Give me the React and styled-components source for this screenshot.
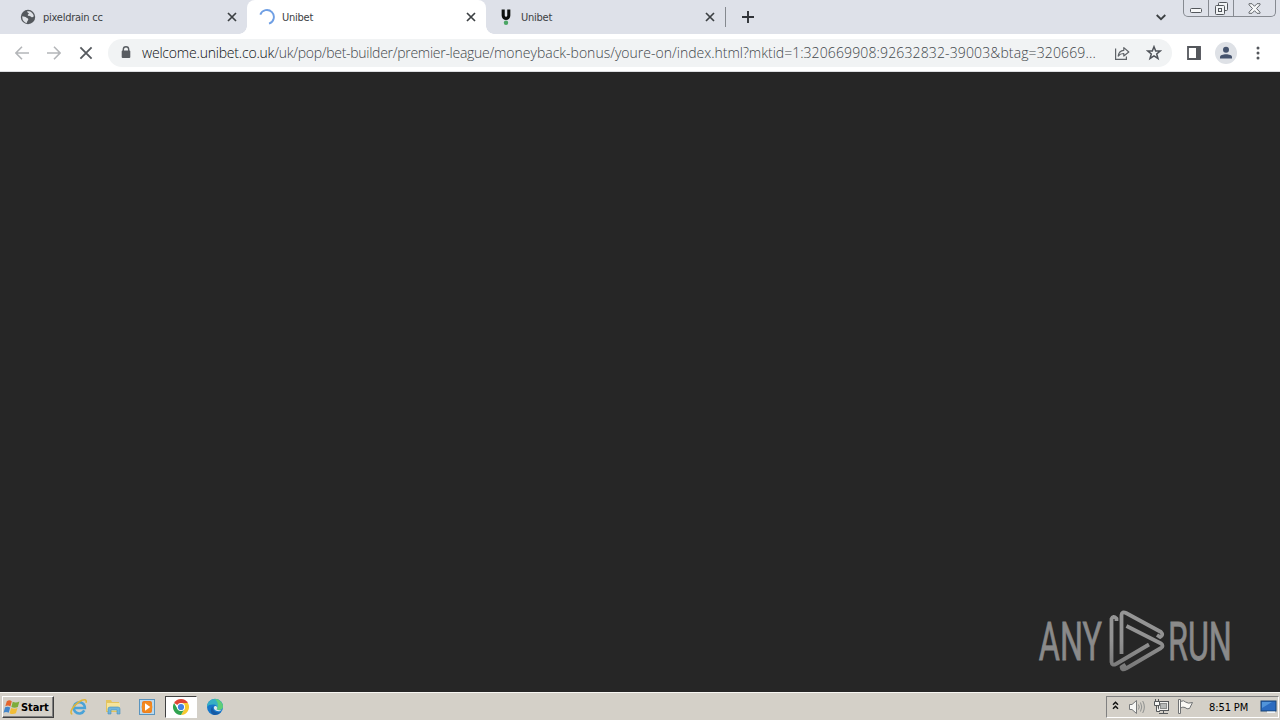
import React from 'react'
import styled, { createGlobalStyle } from 'styled-components';

const tabs = [
    { title: 'pixeldrain cc', icon: 'globe' },
    { title: 'Unibet', icon: 'spinner', active: true },
    { title: 'Unibet', icon: 'unibet' },
];

const TabIcon = ({ name }) => {
    if (name === 'globe') return (
        <svg width="16" height="16" viewBox="0 0 16 16">
            <circle cx="8" cy="8" r="7.2" fill="#54585d" />
            <path d="M2.3 7.2 C4 7.6 5.6 7.4 6.3 8.6 C7 9.6 8.4 9.2 8.3 10.6 C8.1 11.8 7 12 6.8 13.9 C4 13.4 2 11 2.3 7.2Z" fill="#dee1e6" />
            <path d="M7.2 2.2 C10.5 1.8 13.4 4 13.8 7.2 C12.8 8.6 12 8.6 11 7.8 C10.2 7 9 7.4 8 6.6 C7 5.4 9.2 5.2 8.8 4.2 C8.4 3.6 6.8 3.6 7.2 2.2Z" fill="#dee1e6" />
        </svg>
    );
    if (name === 'spinner') return (
        <svg width="16" height="16" viewBox="0 0 16 16">
            <path d="M1.3 5.6 A7 7 0 1 1 10 14.7" fill="none" stroke="#6f9fe4" strokeWidth="1.9" />
        </svg>
    );
    return (
        <svg width="16" height="16" viewBox="0 0 16 16">
            <path d="M5.2 0.5 V6.6 A2.8 2.8 0 0 0 10.8 6.6 V0.5" fill="none" stroke="#0d100e" strokeWidth="3.1" />
            <circle cx="8" cy="13.8" r="2.2" fill="#4aa564" />
        </svg>
    );
};

const Cross = ({ size, weight, color }) => (
    <svg width={size} height={size} viewBox="0 0 10 10">
        <path d="M1 1L9 9M9 1L1 9" stroke={color} strokeWidth={weight} />
    </svg>
);

function App() {
    return (
        <Screen>
            <GlobalStyle />
            <TabStrip>
                {tabs.map((tab, index) => (
                    <Tab key={index} $active={tab.active}>
                        <TabIcon name={tab.icon} />
                        <TabTitle>{tab.title}</TabTitle>
                        <Cross size={10} weight={1.7} color="#3c4043" />
                    </Tab>
                ))}
                <Divider />
                <NewTab>
                    <svg width="12" height="12" viewBox="0 0 12 12"><path d="M6 0V12M0 6H12" stroke="#303338" strokeWidth="1.9" /></svg>
                </NewTab>
                <TabSearch>
                    <svg width="10" height="7" viewBox="0 0 10 7"><path d="M0.7 1L5 5.2L9.3 1" fill="none" stroke="#3c4043" strokeWidth="1.8" /></svg>
                </TabSearch>
                <WindowButtons>
                    <WindowButton $width={24}>
                        <svg width="12" height="5" viewBox="0 0 12 5"><rect x="0.5" y="0.5" width="11" height="4" rx="1" fill="#f6f7f8" stroke="#53575c" /></svg>
                    </WindowButton>
                    <WindowButton $width={25}>
                        <svg width="13" height="13" viewBox="0 0 13 13" fill="#f1f3f5" stroke="#53575c">
                            <rect x="3.5" y="0.5" width="9" height="8" rx="1" />
                            <rect x="0.5" y="3.5" width="9" height="9" rx="1" />
                            <rect x="3.5" y="6.5" width="3" height="3" />
                        </svg>
                    </WindowButton>
                    <WindowButton $width={42}>
                        <svg width="13" height="11" viewBox="0 0 13 11"><path d="M1 .7H4L6.5 3.3L9 .7H12V1.8L8.5 5.5L12 9.2V10.3H9L6.5 7.7L4 10.3H1V9.2L4.5 5.5L1 1.8Z" fill="#f6f7f8" stroke="#64686d" /></svg>
                    </WindowButton>
                </WindowButtons>
            </TabStrip>
            <Toolbar>
                <NavButtons>
                    <svg width="14" height="14" viewBox="0 0 14 14"><path d="M14 7H1M7 .8L.9 7L7 13.2" fill="none" stroke="#b4b6b9" strokeWidth="1.6" /></svg>
                    <svg width="14" height="14" viewBox="0 0 14 14"><path d="M0 7H13M7 .8L13.1 7L7 13.2" fill="none" stroke="#b4b6b9" strokeWidth="1.6" /></svg>
                    <Cross size={14} weight={1.3} color="#55595e" />
                </NavButtons>
                <AddressBar>
                    <svg width="10" height="13" viewBox="0 0 10 13">
                        <path d="M2.3 5V3.4A2.7 2.7 0 0 1 7.7 3.4V5" fill="none" stroke="#595d62" strokeWidth="1.4" />
                        <rect x="0.7" y="4.5" width="8.6" height="7.5" rx="1" fill="#595d62" />
                    </svg>
                    <Url>
                        <UrlPart $host $spacing={-0.2}>welcome.unibet.co.uk</UrlPart>
                        <UrlPart $spacing={-0.28}>/uk/pop/bet-builder/premier-league/</UrlPart>
                        <UrlPart $spacing={0}>moneyback-bonus/youre-on/index.html?mktid=1:</UrlPart>
                        <UrlPart $spacing={0.13}>320669908:92632832-39003&amp;btag=320669...</UrlPart>
                    </Url>
                    <svg width="16" height="16" viewBox="0 0 16 16" fill="none" stroke="#5f6368" strokeWidth="1.2">
                        <path d="M1.6 3.5V14.4H12.4V11.5" />
                        <path d="M4.2 11C4.6 7.6 6.5 5.6 9.8 5.3V2.6L14.8 7L9.8 11V8.5C7.4 8.4 5.6 9.3 4.2 11Z" strokeLinejoin="round" />
                    </svg>
                    <Star width="16" height="16" viewBox="0 0 16 16">
                        <path d="M8 1.7L9.7 6H14.2L10.7 8.9L12 13.5L8 10.9L4 13.5L5.3 8.9L1.8 6H6.3Z" fill="none" stroke="#50545a" strokeWidth="1.5" />
                    </Star>
                </AddressBar>
                <Actions>
                    <svg width="14" height="14" viewBox="0 0 14 14"><path d="M1 1H13V13H1Z" fill="none" stroke="#54575c" strokeWidth="1.8" /><path d="M9 1H13.5V13H9Z" fill="#54575c" /></svg>
                    <Avatar>
                        <svg width="14" height="14" viewBox="0 0 14 14" fill="#45536d"><circle cx="7" cy="3.8" r="3" /><path d="M1 12.5V11C1 7.2 13 7.2 13 11V12.5Z" /></svg>
                    </Avatar>
                    <svg width="4" height="14" viewBox="0 0 4 14" fill="#54575c"><circle cx="2" cy="2" r="1.5" /><circle cx="2" cy="7" r="1.5" /><circle cx="2" cy="12" r="1.5" /></svg>
                </Actions>
            </Toolbar>
            <Page>
                <Watermark />
            </Page>
            <Taskbar>
                <StartButton>
                    <svg width="18" height="17" viewBox="0 0 17 16">
                        <path d="M3.6 2Q6 .5 8.3 2L7 7Q4.8 5.5 2.2 6.8Z" fill="#e4652c" />
                        <path d="M9.2 2.5Q12 4 15.5 2.3L14 7.5Q11 8.8 7.9 7.5Z" fill="#7dac3b" />
                        <path d="M2 7.8Q4.5 6.6 6.8 8L5.4 13Q3 11.5 .5 12.9Z" fill="#4386ca" />
                        <path d="M7.7 8.5Q10.7 9.8 13.7 8.5L12.2 13.5Q9 15 6.2 13.4Z" fill="#f1bd37" />
                    </svg>
                    Start
                </StartButton>
                <QuickLaunch>
                    <LaunchItem><ExplorerIcon /></LaunchItem>
                    <LaunchItem><FolderIcon /></LaunchItem>
                    <LaunchItem><PlayerIcon /></LaunchItem>
                    <LaunchItem $active><ChromeIcon /></LaunchItem>
                    <LaunchItem><EdgeIcon /></LaunchItem>
                </QuickLaunch>
                <Tray>
                    <svg width="7" height="12" viewBox="0 0 7 12"><path d="M1 3.7L3.5 1.2L6 3.7M1 7.7L3.5 5.2L6 7.7" fill="none" stroke="#111" strokeWidth="1.5" /></svg>
                    <TrayIcons>
                        <SpeakerIcon />
                        <NetworkIcon />
                        <FlagIcon />
                    </TrayIcons>
                    <Clock>8:51 PM</Clock>
                    <DesktopIcon />
                </Tray>
            </Taskbar>
        </Screen>
    )
}

export default App

const Watermark = () => (
    <svg width="196" height="64" viewBox="0 0 196 64">
        <defs>
            <linearGradient id="silver" x1="0" y1="0" x2="0" y2="64" gradientUnits="userSpaceOnUse">
                <stop offset="0" stopColor="#969696" />
                <stop offset="0.5" stopColor="#929292" />
                <stop offset="1" stopColor="#747474" />
            </linearGradient>
        </defs>
        <g fill="#8a8a8a" stroke="#8a8a8a" strokeWidth="0.8" fontFamily="Roboto" fontSize="53" fontWeight="400">
            <text transform="translate(0.8 50.5) scale(0.61 1)">ANY</text>
            <text transform="translate(130 50.5) scale(0.61 1)">RUN</text>
        </g>
        <g fill="none" stroke="url(#silver)" strokeWidth="3.8" strokeLinejoin="round">
            <path d="M78.5 12V9.5Q75 6 73.5 10V53Q74 57 78 55L111 35.5" />
            <path d="M83.5 45V6Q84 2 88 4L123 23Q126 26 122 28L119 26" />
            <path d="M88.5 17L123 34.5Q126 37 123 39L88 59.5Q84 62 83.5 58L87.5 55.5" />
        </g>
    </svg>
);

const ExplorerIcon = () => (
    <svg width="18" height="18" viewBox="0 0 18 18">
        <path d="M14.3 12.4A5.6 5.6 0 1 1 14.9 9.9H4.5" fill="none" stroke="#4aa3d8" strokeWidth="2.5" />
        <path d="M2.3 16.2C-1.5 15 3.5 7.5 8.8 4C13.4 .9 17.3 .8 16 4.8" fill="none" stroke="#dfb63c" strokeWidth="1.6" />
    </svg>
);

const FolderIcon = () => (
    <svg width="18" height="18" viewBox="0 0 18 18">
        <path d="M2 2H7L8 4H15V14H2Z" fill="#e4c45e" />
        <path d="M3 5H16V13H3Z" fill="#f5e49b" />
        <path d="M4 16V11Q4 9 6 9H14Q16 9 16 11V16H13V12H7V16Z" fill="#70b5dc" stroke="#488eb8" strokeWidth=".6" />
    </svg>
);

const PlayerIcon = () => (
    <svg width="18" height="18" viewBox="0 0 18 18">
        <rect x="1.5" y="1.5" width="15" height="15" fill="#b9d9ee" stroke="#5a94be" />
        <rect x="4" y="3" width="10" height="12" rx="2" fill="#ed7d1e" />
        <circle cx="9" cy="9" r="5.4" fill="#f28a20" />
        <path d="M7 5.3L12.3 9L7 12.7Z" fill="#fff" />
    </svg>
);

const ChromeIcon = () => (
    <svg width="18" height="18" viewBox="0 0 18 18">
        <circle cx="9" cy="9" r="8" fill="#fff" />
        <path d="M9 9L2.07 5A8 8 0 0 1 15.93 5Z" fill="#df4535" />
        <path d="M9 5H15.93A8 8 0 0 1 9 17L12.5 11Z" fill="#f7c92f" />
        <path d="M2.07 5L5.6 11L12.4 11L9 17A8 8 0 0 1 2.07 5Z" fill="#31a350" />
        <circle cx="9" cy="9" r="4" fill="#fff" />
        <circle cx="9" cy="9" r="3.1" fill="#4382e4" />
    </svg>
);

const EdgeIcon = () => (
    <svg width="18" height="18" viewBox="0 0 18 18">
        <circle cx="9" cy="9" r="8" fill="#1677ca" />
        <path d="M1 9A8 8 0 0 1 17 8.5C17 12 13 12.5 10.5 11.3C12 10 11 6.8 8 6.5C4.5 6.3 2 7 1 9Z" fill="#36afc4" />
        <path d="M9 1A8 8 0 0 1 17 8.5C17 12 13 12.5 10.5 11.3C13 8 12 4 9 1Z" fill="#5fce78" />
        <path d="M6.8 8.5C5.8 12.5 10 15.5 14.8 14.2A8 8 0 0 1 8 17C4 15.5 4 10 6.8 8.5Z" fill="#175aa4" />
        <path d="M10.5 11.3C12 10 11 8 9 8C6.5 9 8 13.6 13.5 13.2L16 11.7C14 12.5 12 12.2 10.5 11.3Z" fill="#dce8ea" />
    </svg>
);

const SpeakerIcon = () => (
    <svg width="18" height="16" viewBox="0 0 18 16" stroke="#77797a" fill="none">
        <path d="M1.5 5.5H4L8.5 1.5V14.5L4 10.5H1.5Z" fill="#f7f7f5" />
        <path d="M10.5 5.5Q12 8 10.5 10.5M12.5 3.5Q15 8 12.5 12.5M14.7 2Q18 8 14.7 14" stroke="#8e908f" />
    </svg>
);

const NetworkIcon = () => (
    <svg width="17" height="16" viewBox="0 0 17 16" stroke="#55585a">
        <rect x="5.5" y="2.5" width="10" height="9" fill="#f1f1ef" />
        <rect x="7.5" y="4.5" width="6" height="5" fill="#b6b9b8" stroke="#8b8d8c" />
        <path d="M6 14.5H15M10.5 12V14" />
        <path d="M2.5 0V2M5.5 0V2M1.5 2.5H6.5V6.5H1.5ZM3.5 7V12.5H7" fill="#f7f7f5" />
    </svg>
);

const FlagIcon = () => (
    <svg width="17" height="16" viewBox="0 0 17 16" fill="#faf9f5" stroke="#707274">
        <path d="M3.5 2.5Q7 .8 8.5 3Q11 5 15.5 3.5L12.5 9.5Q10 10.5 8 8.5Q6 7.5 3.5 9Z" />
        <path d="M1.5 .5H3.5V14.5H1.5Z" />
    </svg>
);

const DesktopIcon = () => (
    <svg width="17" height="14" viewBox="0 0 17 14">
        <rect x="1" y="1" width="15" height="10" fill="#2b6bc0" stroke="#174274" />
        <path d="M2 2H12L2 8Z" fill="#5194da" />
        <path d="M7 11.5H15V13H7Z" fill="#edf4fa" />
    </svg>
);

const GlobalStyle = createGlobalStyle`
    * { box-sizing: border-box; }
    body { margin: 0; overflow: hidden; }
    svg { display: block; flex-shrink: 0; }
`;
const Screen = styled.div`
    width: 1280px;
    height: 720px;
    display: flex;
    flex-direction: column;
    font-family: 'DejaVu Sans Condensed', 'DejaVu Sans', sans-serif;
`;
const TabStrip = styled.div`
    height: 34px;
    display: flex;
    align-items: center;
    padding-left: 8px;
    background: #dee1e9;
`;
const Tab = styled.div`
    position: relative;
    width: 239px;
    height: 34px;
    display: flex;
    align-items: center;
    padding: 0 10px 0 12px;
    border-radius: 8px 8px 0 0;
    background: ${props => props.$active ? '#fff' : 'transparent'};
    /* curved feet of the selected tab */
    ${props => props.$active && `
        &::before, &::after {
            content: '';
            position: absolute;
            bottom: 0;
            width: 8px;
            height: 8px;
        }
        &::before {
            left: -8px;
            background: radial-gradient(circle at 0 0, transparent 7.5px, #fff 8px);
        }
        &::after {
            right: -8px;
            background: radial-gradient(circle at 100% 0, transparent 7.5px, #fff 8px);
        }
    `}
`;
const TabTitle = styled.span`
    flex: 1;
    margin-left: 7px;
    font: 11px 'DejaVu Sans Condensed', 'DejaVu Sans', sans-serif;
    letter-spacing: -0.25px;
    color: #3c4043;
`;
const Divider = styled.div`
    width: 1px;
    height: 20px;
    background: #85898f;
`;
const NewTab = styled.div`
    margin-left: 16px;
`;
const TabSearch = styled.div`
    margin-left: auto;
`;
const WindowButtons = styled.div`
    align-self: flex-start;
    display: flex;
    height: 17px;
    margin: 0 4px 0 17px;
    border: 1px solid #868a91;
    border-top: 0;
    border-radius: 0 0 5px 5px;
`;
const WindowButton = styled.div`
    width: ${props => props.$width}px;
    display: flex;
    align-items: center;
    justify-content: center;
    & + & { border-left: 1px solid #868a91; }
    &:first-child { padding-top: 4px; }
`;
const Toolbar = styled.div`
    height: 38px;
    display: flex;
    align-items: center;
    background: #fff;
    border-bottom: 1px solid #dcdde0;
`;
const NavButtons = styled.div`
    display: flex;
    gap: 18px;
    width: 108px;
    padding-left: 15px;
`;
const AddressBar = styled.div`
    width: 1064px;
    height: 28px;
    display: flex;
    align-items: center;
    padding: 0 10px 0 13px;
    border-radius: 14px;
    background: #f1f3f4;
`;
const Url = styled.div`
    flex: 1;
    display: flex;
    margin-left: 11px;
    white-space: nowrap;
    font: 300 14px 'Open Sans', sans-serif;
`;
const UrlPart = styled.span`
    color: ${props => props.$host ? '#0c0f12' : '#42474b'};
    letter-spacing: ${props => props.$spacing}px;
`;
const Star = styled.svg`
    margin-left: 16px;
`;
const Actions = styled.div`
    flex: 1;
    display: flex;
    align-items: center;
    padding-left: 15px;
`;
const Avatar = styled.div`
    width: 22px;
    height: 22px;
    display: flex;
    align-items: center;
    justify-content: center;
    margin: 0 19px 0 14px;
    border-radius: 50%;
    background: #dee1e6;
`;
const Page = styled.div`
    flex: 1;
    display: flex;
    align-items: flex-end;
    justify-content: flex-end;
    padding: 0 46px 19px 0;
    background: #262626;
`;
const Taskbar = styled.div`
    height: 28px;
    display: flex;
    align-items: center;
    padding: 1px 0 0 2px;
    background: #d4d0c8;
    border-top: 1px solid #f7f6f2;
`;
const StartButton = styled.div`
    width: 52px;
    height: 22px;
    display: flex;
    align-items: center;
    padding-left: 0;
    border: 1px solid;
    border-color: #fff #404040 #404040 #fff;
    box-shadow: inset -1px -1px #808080;
    font: bold 11px 'DejaVu Sans Condensed', 'DejaVu Sans', sans-serif;
    letter-spacing: -0.1px;
    color: #000;
`;
const QuickLaunch = styled.div`
    display: flex;
    gap: 2px;
    margin-left: 9px;
`;
const LaunchItem = styled.div`
    width: 32px;
    height: 22px;
    display: flex;
    align-items: center;
    justify-content: center;
    ${props => props.$active && `
        background: #fff;
        border: 1px solid;
        border-color: #404040 #fff #fff #404040;
    `}
`;
const Tray = styled.div`
    width: 173px;
    height: 22px;
    display: flex;
    align-items: center;
    margin-left: auto;
    margin-right: 1px;
    padding-left: 5px;
    border: 1px solid;
    border-color: #808080 #fff #fff #808080;
`;
const TrayIcons = styled.div`
    display: flex;
    gap: 7px;
    margin-left: 9px;
`;
const Clock = styled.span`
    width: 51px;
    margin-left: 15px;
    white-space: nowrap;
    font: 11px 'DejaVu Sans Condensed', 'DejaVu Sans', sans-serif;
    letter-spacing: -0.1px;
    color: #000;
`;
